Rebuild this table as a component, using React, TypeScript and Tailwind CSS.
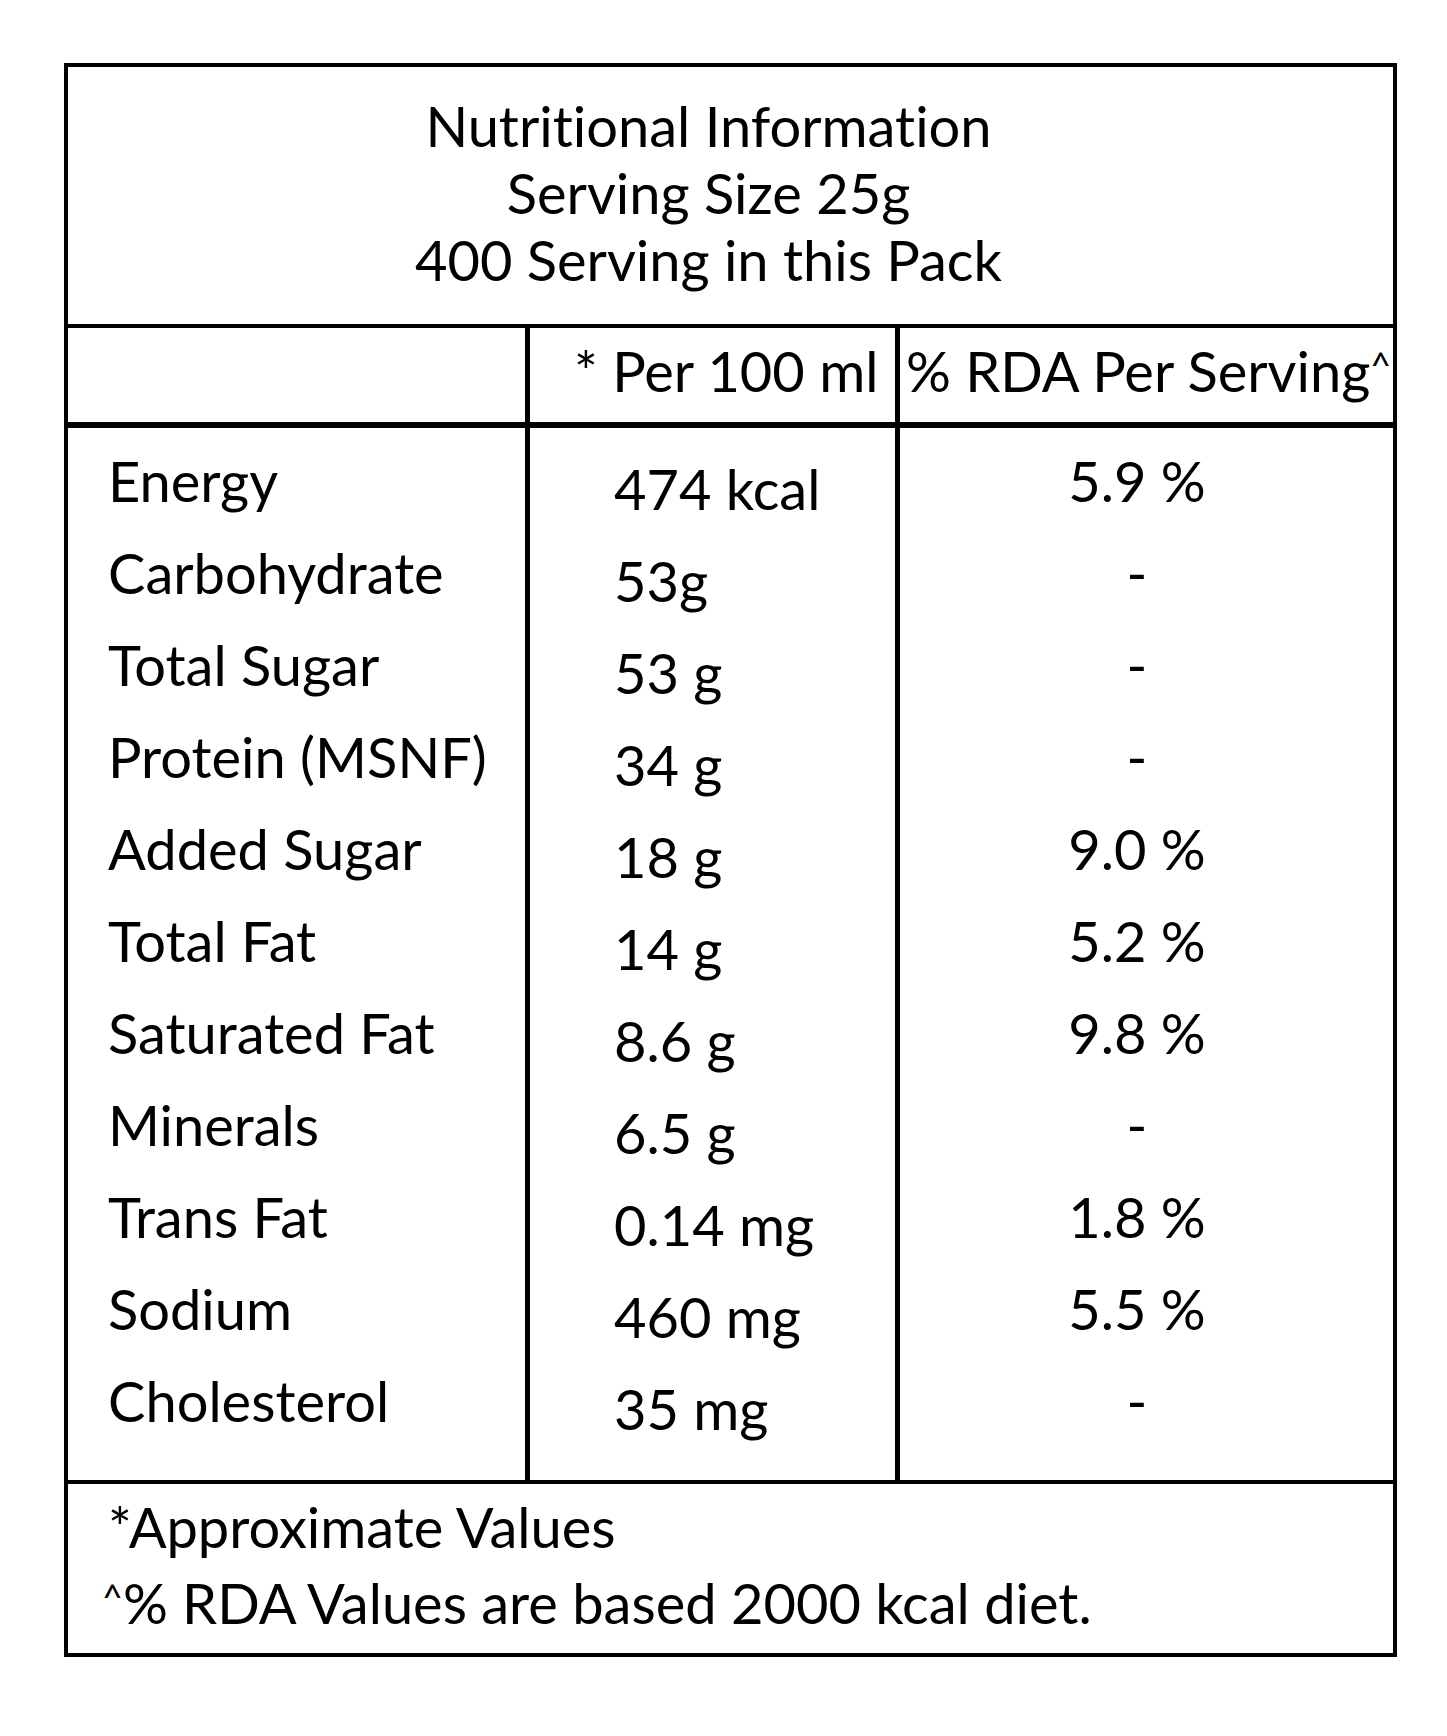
import React from "react";

const rows = [
  { name: "Energy", amount: "474 kcal", rda: "5.9 %" },
  { name: "Carbohydrate", amount: "53g", rda: "-" },
  { name: "Total Sugar", amount: "53 g", rda: "-" },
  { name: "Protein (MSNF)", amount: "34 g", rda: "-" },
  { name: "Added Sugar", amount: "18 g", rda: "9.0 %" },
  { name: "Total Fat", amount: "14 g", rda: "5.2 %" },
  { name: "Saturated Fat", amount: "8.6 g", rda: "9.8 %" },
  { name: "Minerals", amount: "6.5 g", rda: "-" },
  { name: "Trans Fat", amount: "0.14 mg", rda: "1.8 %" },
  { name: "Sodium", amount: "460 mg", rda: "5.5 %" },
  { name: "Cholesterol", amount: "35 mg", rda: "-" },
];

function Caret() {
  return <span className="text-[36px] leading-none align-[13px]">^</span>;
}

function App() {
  return (
    <div className="min-h-[1736px] bg-white pt-[63px] pl-[64px] text-black font-['Lato',sans-serif] text-[56px] [font-variant-ligatures:none]">
      <div className="w-[1333px] border-4 border-black">
        {/* Title */}
        <div className="h-[261px] pt-[25px] pr-[44px] text-center leading-[67px] border-b-4 border-black">
          <div>Nutritional Information</div>
          <div>Serving Size 25g</div>
          <div>400 Serving in this Pack</div>
        </div>

        {/* Column headings */}
        <div className="grid grid-cols-[462px_370px_493px] h-[100px] border-b-[6px] border-black leading-[66px]">
          <div className="border-r-[5px] border-black" />
          <div className="border-r-[5px] border-black pt-[10px] pl-[44px] whitespace-nowrap">
            * Per 100 ml
          </div>
          <div className="pt-[10px] pl-[6px] whitespace-nowrap">
            % RDA Per Serving
            <Caret />
          </div>
        </div>

        {/* Values */}
        <div className="grid grid-cols-[462px_370px_493px] h-[1056px] border-b-4 border-black leading-[92px]">
          <div className="border-r-[5px] border-black pt-[7px] pl-[40px]">
            {rows.map((r) => (
              <div key={r.name} className="whitespace-nowrap">
                {r.name}
              </div>
            ))}
          </div>
          <div className="border-r-[5px] border-black pt-[15px] pl-[84px]">
            {rows.map((r) => (
              <div key={r.name} className="whitespace-nowrap">
                {r.amount}
              </div>
            ))}
          </div>
          <div className="pt-[7px] pr-[19px] text-center">
            {rows.map((r) => (
              <div key={r.name} className="whitespace-nowrap">
                {r.rda}
              </div>
            ))}
          </div>
        </div>

        {/* Footnotes */}
        <div className="h-[169px] pt-[5px] pl-[34px] leading-[76px]">
          <div className="pl-[6px]">*Approximate Values</div>
          <div className="whitespace-nowrap">
            <Caret />% RDA Values are based 2000 kcal diet.
          </div>
        </div>
      </div>
    </div>
  );
}

export default App;
